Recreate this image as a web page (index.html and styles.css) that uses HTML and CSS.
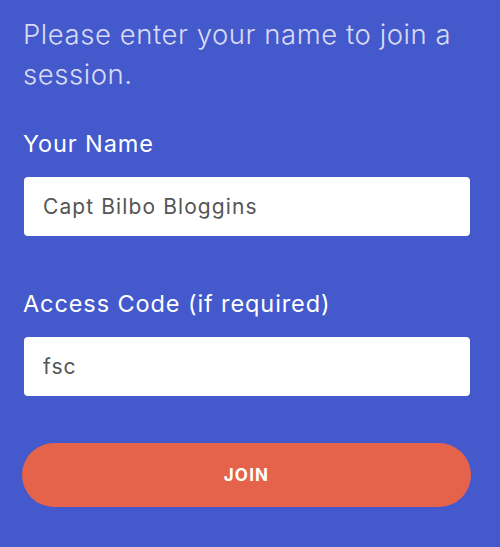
FILE: index.html
```html
<!DOCTYPE html>
<html lang="en">
<head>
    <meta charset="UTF-8">
    <meta name="viewport" content="width=device-width, initial-scale=1.0">
    <title>Join a session</title>
    <link rel="stylesheet" href="styles.css">
</head>
<body>

<div class="join-panel">
    <p class="intro">Please enter your name to join a session.</p>

    <form class="join-form" onsubmit="return false;">
        <!-- name -->
        <div class="field">
            <label for="nameInput">Your Name</label>
            <input type="text" id="nameInput" value="Capt Bilbo Bloggins" />
        </div>

        <!-- access code -->
        <div class="field field-last">
            <label for="codeInput">Access Code (if required)</label>
            <input type="text" id="codeInput" value="fsc" />
        </div>

        <button type="submit" class="join-button">JOIN</button>
    </form>
</div>

</body>
</html>
```

FILE: styles.css
```css
html, body {
    margin: 0;
    height: 100%;
}
body {
    background-color: #4459cc;
    font-family: Inter, "Open Sans", sans-serif;
    color: white;
}
.join-panel {
    padding: 14px 30px 0 23px;
}
.intro {
    margin: 0 0 35px;
    font-size: 27.5px;
    font-weight: 300;
    letter-spacing: 0.55px;
    line-height: 40px;
    color: rgba(255, 255, 255, 0.8);
}
.join-form {
    display: flex;
    flex-direction: column;
}
.field {
    display: flex;
    flex-direction: column;
    margin-bottom: 53px;
}
.field-last {
    margin-bottom: 47px;
}
.field label {
    font-size: 23.5px;
    letter-spacing: 0.9px;
    line-height: 30px;
    margin-bottom: 18px;
}
.field input {
    margin: 0 0 0 1px;
    height: 59px;
    box-sizing: border-box;
    padding: 0 19px;
    font-family: inherit;
    font-size: 21px;
    letter-spacing: 1.1px;
    color: #555;
    background: white;
    border: none;
    border-radius: 4px;
    outline: none;
}
.join-button {
    margin: 0 0 0 -1px;
    height: 64px;
    width: calc(100% + 2px);
    font-family: inherit;
    font-size: 17px;
    font-weight: 700;
    letter-spacing: 1.2px;
    color: white;
    background-color: #e4634a;
    border: none;
    border-radius: 32px;
    cursor: pointer;
}
```
